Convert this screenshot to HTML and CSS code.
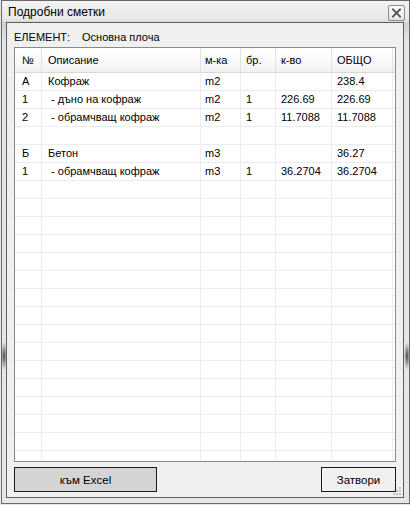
FILE: index.html
```html
<!DOCTYPE html>
<html lang="bg">
<head>
<meta charset="utf-8">
<title>Подробни сметки</title>
<link rel="stylesheet" href="styles.css">
</head>
<body>
<div class="window">
  <div class="titlebar">
    <span class="title">Подробни сметки</span>
    <div class="close-btn">
      <svg width="11" height="10" viewBox="0 0 11 10">
        <path d="M2 1.5 L9 8.5 M9 1.5 L2 8.5" stroke="#ffffff" stroke-width="4" stroke-linecap="square"/>
        <path d="M2 1.5 L9 8.5 M9 1.5 L2 8.5" stroke="#5a5a5a" stroke-width="2" stroke-linecap="square"/>
      </svg>
    </div>
  </div>
  <div class="panel">
    <div class="element-row">
      <span class="el-label">ЕЛЕМЕНТ:</span>
      <span class="el-value">Основна плоча</span>
    </div>
    <div class="grid">
      <div class="row head">
        <div class="c c1">№</div><div class="c c2">Описание</div><div class="c c3">м-ка</div><div class="c c4">бр.</div><div class="c c5">к-во</div><div class="c c6">ОБЩО</div>
      </div>
      <div class="row"><div class="c c1">А</div><div class="c c2">Кофраж</div><div class="c c3">m2</div><div class="c c4"></div><div class="c c5"></div><div class="c c6">238.4</div></div>
      <div class="row"><div class="c c1">1</div><div class="c c2">&nbsp;- дъно на кофраж</div><div class="c c3">m2</div><div class="c c4">1</div><div class="c c5">226.69</div><div class="c c6">226.69</div></div>
      <div class="row"><div class="c c1">2</div><div class="c c2">&nbsp;- обрамчващ кофраж</div><div class="c c3">m2</div><div class="c c4">1</div><div class="c c5">11.7088</div><div class="c c6">11.7088</div></div>
      <div class="row"><div class="c c1"></div><div class="c c2"></div><div class="c c3"></div><div class="c c4"></div><div class="c c5"></div><div class="c c6"></div></div>
      <div class="row"><div class="c c1">Б</div><div class="c c2">Бетон</div><div class="c c3">m3</div><div class="c c4"></div><div class="c c5"></div><div class="c c6">36.27</div></div>
      <div class="row"><div class="c c1">1</div><div class="c c2">&nbsp;- обрамчващ кофраж</div><div class="c c3">m3</div><div class="c c4">1</div><div class="c c5">36.2704</div><div class="c c6">36.2704</div></div>
      <div class="row"><div class="c c1"></div><div class="c c2"></div><div class="c c3"></div><div class="c c4"></div><div class="c c5"></div><div class="c c6"></div></div>
      <div class="row"><div class="c c1"></div><div class="c c2"></div><div class="c c3"></div><div class="c c4"></div><div class="c c5"></div><div class="c c6"></div></div>
      <div class="row"><div class="c c1"></div><div class="c c2"></div><div class="c c3"></div><div class="c c4"></div><div class="c c5"></div><div class="c c6"></div></div>
      <div class="row"><div class="c c1"></div><div class="c c2"></div><div class="c c3"></div><div class="c c4"></div><div class="c c5"></div><div class="c c6"></div></div>
      <div class="row"><div class="c c1"></div><div class="c c2"></div><div class="c c3"></div><div class="c c4"></div><div class="c c5"></div><div class="c c6"></div></div>
      <div class="row"><div class="c c1"></div><div class="c c2"></div><div class="c c3"></div><div class="c c4"></div><div class="c c5"></div><div class="c c6"></div></div>
      <div class="row"><div class="c c1"></div><div class="c c2"></div><div class="c c3"></div><div class="c c4"></div><div class="c c5"></div><div class="c c6"></div></div>
      <div class="row"><div class="c c1"></div><div class="c c2"></div><div class="c c3"></div><div class="c c4"></div><div class="c c5"></div><div class="c c6"></div></div>
      <div class="row"><div class="c c1"></div><div class="c c2"></div><div class="c c3"></div><div class="c c4"></div><div class="c c5"></div><div class="c c6"></div></div>
      <div class="row"><div class="c c1"></div><div class="c c2"></div><div class="c c3"></div><div class="c c4"></div><div class="c c5"></div><div class="c c6"></div></div>
      <div class="row"><div class="c c1"></div><div class="c c2"></div><div class="c c3"></div><div class="c c4"></div><div class="c c5"></div><div class="c c6"></div></div>
      <div class="row"><div class="c c1"></div><div class="c c2"></div><div class="c c3"></div><div class="c c4"></div><div class="c c5"></div><div class="c c6"></div></div>
      <div class="row"><div class="c c1"></div><div class="c c2"></div><div class="c c3"></div><div class="c c4"></div><div class="c c5"></div><div class="c c6"></div></div>
      <div class="row"><div class="c c1"></div><div class="c c2"></div><div class="c c3"></div><div class="c c4"></div><div class="c c5"></div><div class="c c6"></div></div>
      <div class="row"><div class="c c1"></div><div class="c c2"></div><div class="c c3"></div><div class="c c4"></div><div class="c c5"></div><div class="c c6"></div></div>
      <div class="row"><div class="c c1"></div><div class="c c2"></div><div class="c c3"></div><div class="c c4"></div><div class="c c5"></div><div class="c c6"></div></div>
    </div>
    <div class="buttons">
      <div class="btn btn-excel">към Excel</div>
      <div class="btn btn-close">Затвори</div>
    </div>
    <div class="grip">
      <svg width="8" height="8" viewBox="0 0 8 8">
        <rect x="6" y="0" width="2" height="2" fill="#c4c4c4"/>
        <rect x="3" y="3" width="2" height="2" fill="#c4c4c4"/>
        <rect x="6" y="3" width="2" height="2" fill="#c4c4c4"/>
        <rect x="0" y="6" width="2" height="2" fill="#c4c4c4"/>
        <rect x="3" y="6" width="2" height="2" fill="#c4c4c4"/>
        <rect x="6" y="6" width="2" height="2" fill="#c4c4c4"/>
      </svg>
    </div>
  </div>
</div>
</body>
</html>
```
FILE: styles.css
```css
html, body {
  margin: 0;
  padding: 0;
}
body {
  width: 410px;
  height: 505px;
  overflow: hidden;
  background: #e6e6e6;
  font-family: "Liberation Sans", Arial, sans-serif;
  color: #000;
}
.window {
  box-sizing: border-box;
  width: 409px;
  height: 504px;
  margin-left: 1px;
  border: 1px solid #6a6a6a;
  background:
    radial-gradient(ellipse 3px 14px at 2px 355px, #4a4a4a 0%, rgba(80,80,80,0) 100%),
    radial-gradient(ellipse 3px 14px at 405px 355px, #4a4a4a 0%, rgba(80,80,80,0) 100%),
    linear-gradient(to bottom, #f2f2f2 0px, #e8e8e8 18px, #d2d2d2 22px, #e4e4e4 40px, #e6e6e6 100%);
  display: flex;
  flex-direction: column;
}
.titlebar {
  height: 21px;
  display: flex;
  align-items: flex-start;
  justify-content: space-between;
  padding-left: 6px;
}
.title {
  font-size: 12px;
  line-height: 14px;
  margin-top: 4px;
}
.close-btn {
  box-sizing: border-box;
  width: 17px;
  height: 16px;
  margin-top: 4px;
  margin-right: 4px;
  border: 1px solid #8c8c8c;
  border-radius: 2px;
  background: linear-gradient(to bottom, #fbfbfb, #e2e2e2);
  display: flex;
  align-items: center;
  justify-content: center;
}
.panel {
  position: relative;
  box-sizing: border-box;
  height: 476px;
  margin: 0 5px 0 4px;
  border: 1px solid #5e5e5e;
  background: #f0f0f0;
  display: flex;
  flex-direction: column;
  padding: 0 7px 5px 7px;
}
.element-row {
  box-sizing: border-box;
  height: 24px;
  padding-top: 4px;
  display: flex;
  align-items: center;
  font-size: 11px;
}
.el-label {
  width: 68px;
}
.grid {
  box-sizing: border-box;
  height: 415px;
  border: 1px solid #8a8a8a;
  background: #fff;
  overflow: hidden;
  font-size: 11px;
}
.row {
  display: flex;
  box-sizing: border-box;
  height: 18px;
  border-bottom: 1px solid #ececec;
}
.row.head {
  height: 25px;
  border-bottom: 1px solid #d8d8d8;
  background: linear-gradient(to bottom, #ffffff 0%, #fafafa 50%, #f0f0f0 100%);
}
.c {
  box-sizing: border-box;
  border-right: 1px solid #ececec;
  padding-left: 5px;
  line-height: 17px;
  white-space: nowrap;
  overflow: hidden;
}
.head .c {
  line-height: 24px;
  border-right-color: #e2e2e2;
}
.c1 { width: 27px; padding-left: 7px; }
.c2 { width: 159px; padding-left: 6px; }
.c3 { width: 40px; padding-left: 4px; }
.c4 { width: 35px; }
.c5 { width: 56px; }
.c6 { width: 61px; }
.buttons {
  margin-top: 5px;
  display: flex;
  justify-content: space-between;
}
.btn {
  box-sizing: border-box;
  height: 25px;
  border: 1px solid #1c1c1c;
  font-size: 11.5px;
  display: flex;
  align-items: center;
  justify-content: center;
}
.btn-excel {
  width: 143px;
  background: #d4d4d4;
}
.btn-close {
  width: 75px;
  background: #f0f0f0;
}
.grip {
  position: absolute;
  right: 2px;
  bottom: 2px;
  width: 8px;
  height: 8px;
  line-height: 0;
}
```
